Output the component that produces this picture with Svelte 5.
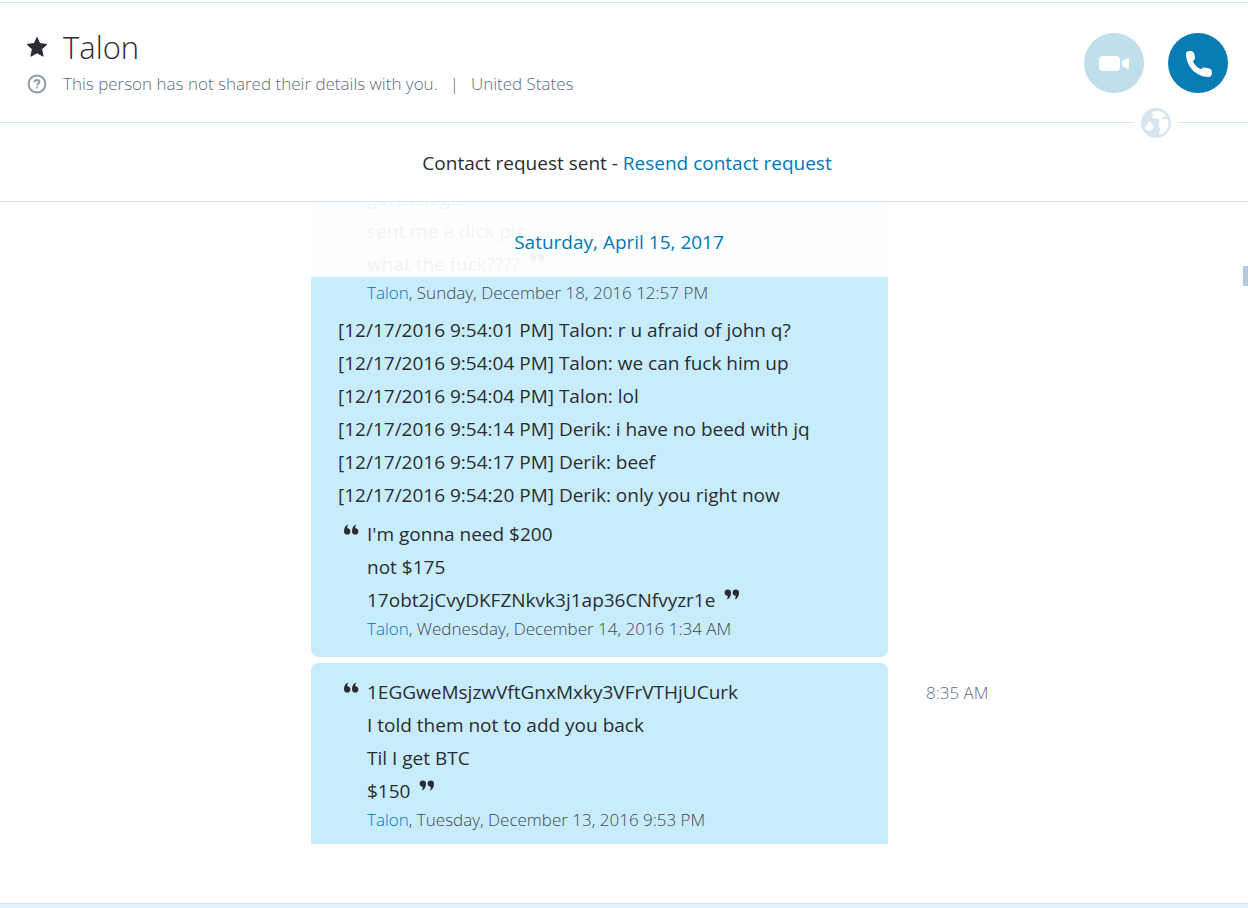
<script>
  const contact = { name: 'Talon', status: 'This person has not shared their details with you.', location: 'United States' }

  const messages = [
    {
      time: '',
      parts: [
        { kind: 'quote', lines: ['gorde logic', 'sent me a dick pic', 'what the fuck????'], author: 'Talon', date: 'Sunday, December 18, 2016 12:57 PM' },
        { kind: 'log', lines: [
          '[12/17/2016 9:54:01 PM] Talon: r u afraid of john q?',
          '[12/17/2016 9:54:04 PM] Talon: we can fuck him up',
          '[12/17/2016 9:54:04 PM] Talon: lol',
          '[12/17/2016 9:54:14 PM] Derik: i have no beed with jq',
          '[12/17/2016 9:54:17 PM] Derik: beef',
          '[12/17/2016 9:54:20 PM] Derik: only you right now',
        ] },
        { kind: 'quote', lines: ["I'm gonna need $200", 'not $175', '17obt2jCvyDKFZNkvk3j1ap36CNfvyzr1e'], author: 'Talon', date: 'Wednesday, December 14, 2016 1:34 AM' },
      ],
    },
    {
      time: '8:35 AM',
      parts: [
        { kind: 'quote', lines: ['1EGGweMsjzwVftGnxMxky3VFrVTHjUCurk', 'I told them not to add you back', 'Til I get BTC', '$150'], author: 'Talon', date: 'Tuesday, December 13, 2016 9:53 PM' },
      ],
    },
  ]
</script>

{#snippet mark(close)}
  <svg class="mark" class:close viewBox="0 0 16 12" aria-hidden="true">
    <path d="M5.500.500C2.500 1 1 3.500 1 7.500a3.200 3.200 0 1 0 3.400-3.300C4 2.800 4.500 1.400 5.500.500z" />
    <path d="M13.500.500C10.500 1 9 3.500 9 7.500a3.200 3.200 0 1 0 3.400-3.300C12 2.800 12.500 1.400 13.500.500z" />
  </svg>
{/snippet}

<div class="app">
  <header class="top">
    <div class="who">
      <button class="plain" aria-label="Favorite">
        <svg width="22" height="22" viewBox="0 0 22 22"><path fill="#2b2c33" stroke="#2b2c33" stroke-linejoin="round" d="M11 1.500l2.800 6.100 7 .8-5.200 4.700 1.500 7.100-6.100-3.400-6.100 3.400 1.500-7.100-5.200-4.700 7-.8z" /></svg>
      </button>
      <h1>{contact.name}</h1>
      <svg class="unknown" width="20" height="20" viewBox="0 0 20 20" aria-hidden="true">
        <circle cx="10" cy="10" r="8.400" />
        <path d="M7.700 8.200c0-1.500 1-2.300 2.400-2.300s2.300.8 2.300 2c0 1.600-2.200 1.700-2.200 3.500M10.200 12.700v1.700" />
      </svg>
      <p>{contact.status}<span class="bar">|</span>{contact.location}</p>
    </div>
    <div class="calls">
      <button class="call" disabled aria-label="Video call">
        <svg width="60" height="60" viewBox="0 0 60 60"><rect x="15" y="23" width="21" height="15" rx="4" /><path d="M38 28l5.500-2.600q1.500-.6 1.500.8v8.600q0 1.400-1.500.8L38 33z" /></svg>
      </button>
      <button class="call phone" aria-label="Call">
        <svg width="60" height="60" viewBox="0 0 60 60"><path d="M18 20.500c0-1.700 1.800-2.500 4.200-2.500 3 0 3.700 1.200 4.300 3.900.5 2.200.8 4.100-.4 5.100l-1.300 1c1.300 3.600 4.300 6.400 8 8.200l1.300-1c1.100-1 3-.6 5.200-.1 2.900.6 4.700 1.400 4.700 4.400 0 2.800-1.200 4.500-3.300 4.500C28 44 18 33 18 20.500z" /></svg>
      </button>
    </div>
    <span class="globe">
      <svg width="30" height="30" viewBox="0 0 30 30" aria-hidden="true">
        <circle cx="15" cy="15" r="15" fill="#d9e5ee" />
        <path d="M11 4q5-2 10 0 3 1.500 4.500 4.500l-4 .5q-1 .5-.5 2h6q1 4 0 8-2 5.500-7 7.500-2 .5-2-1.500t1-3q.5-1-.5-2.500-1.500-2-.5-4 1-2 0-4-1.500-1.500-4.500-1.300T10 9.500q2 .3 2.500-1L12 6Q10.500 5.500 11 4z" />
        <path d="M7.500 13q3-.5 3 2.300.3 1.700 1.800 2.200 1.500 1.500-.3 3.500-2 2-5 1.500-3-.5-3-3Q4.500 17.500 6.500 16z" />
      </svg>
    </span>
  </header>

  <div class="notice">Contact request sent - <a href="#resend">Resend contact request</a></div>

  <main>
    <h2>Saturday, April 15, 2017</h2>
    <div class="stream">
      {#each messages as message}
        <article>
          <div class="bubble">
            {#each message.parts as part}
              {#if part.kind === 'quote'}
                <blockquote>
                  {@render mark(false)}
                  <div>
                    {#each part.lines as line, i}
                      <p>{line}{#if i === part.lines.length - 1}{@render mark(true)}{/if}</p>
                    {/each}
                    <footer><a href="#profile">{part.author}</a>, {part.date}</footer>
                  </div>
                </blockquote>
              {:else}
                <div class="log">
                  {#each part.lines as line}<p>{line}</p>{/each}
                </div>
              {/if}
            {/each}
          </div>
          {#if message.time}<time>{message.time}</time>{/if}
        </article>
      {/each}
    </div>
    <span class="thumb"></span>
  </main>

  <div class="composer"></div>
</div>

<style>
  :global(body) { margin: 0; background: #fff; }
  h1, h2, p, blockquote { margin: 0; font-weight: 400; }
  a { color: #0078b7; text-decoration: none; }
  button { border: 0; padding: 0; cursor: pointer; }
  svg { display: block; }

  .app {
    display: flex; flex-direction: column; height: 100vh; box-sizing: border-box; padding-top: 2px;
    font-family: "Open Sans", "Noto Sans", sans-serif; font-size: 19px; color: #2b2c33;
  }

  .top {
    position: relative; flex: none;
    display: flex; justify-content: space-between; align-items: center;
    height: 119px; padding: 0 20px 0 26px;
    border-top: 1px solid #d5e6f1; border-bottom: 1px solid #d5e6f1;
  }
  .who { display: grid; grid-template-columns: 22px 1fr; column-gap: 15px; align-items: center; padding-bottom: 2px; }
  .plain { background: none; }
  h1 { font-size: 31px; line-height: 44px; font-weight: 300; }
  .who p { font-size: 17px; line-height: 30px; font-weight: 300; color: #5d6b80; }
  .bar { margin: 0 12px; }
  .unknown { justify-self: center; fill: none; stroke: #8f9ba5; stroke-width: 2; }
  .calls { display: flex; gap: 24px; }
  .call { width: 60px; height: 60px; border-radius: 50%; background: #c0deec; fill: #fff; }
  .phone { background: #0a7cb5; }
  .globe { position: absolute; right: 70px; bottom: -16px; padding: 0 7px; background: #fff; }
  .globe path { fill: #fff; }

  .notice {
    flex: none; height: 78px; line-height: 80px; padding-left: 6px;
    text-align: center; border-bottom: 1px solid #d9e5ee;
  }

  main {
    position: relative; flex: 1; min-height: 0; overflow: hidden;
    display: flex; flex-direction: column; justify-content: flex-end;
  }
  h2 {
    position: absolute; z-index: 1; top: 0; left: 0; right: 0;
    height: 75px; line-height: 80px; padding-right: 10px; box-sizing: border-box;
    text-align: center; font-size: 19px; color: #0078b7; background: rgba(255,255,255,0.94);
  }
  .stream { display: flex; flex-direction: column; gap: 6px; }
  article { display: grid; grid-template-columns: 311fr 577fr 360fr; }
  .bubble {
    grid-column: 2; min-width: 0; box-sizing: border-box;
    display: flex; flex-direction: column; gap: 6px;
    padding: 13px 27px 17px; border-radius: 8px; background: #c7ecfc;
  }
  article:last-child .bubble { padding-bottom: 13px; border-radius: 8px 8px 0 0; }
  .bubble p { line-height: 33px; }
  .log { padding-top: 4px; }
  blockquote { display: grid; grid-template-columns: 29px 1fr; }
  blockquote footer { font-size: 17px; line-height: 23px; font-weight: 300; color: #3f4656; }
  .mark { width: 16px; height: 12px; margin: 6px 0 0 5px; fill: #2b2c33; }
  .mark.close { display: inline-block; margin: 0 0 0 9px; vertical-align: 7px; transform: rotate(180deg); }
  time { padding-left: 38px; font-size: 17px; line-height: 60px; font-weight: 300; color: #5d6b80; }

  .thumb { position: absolute; z-index: 2; top: 64px; right: 0; width: 5px; height: 20px; background: #b4cadb; }
  .composer { flex: none; height: 64px; box-sizing: border-box; background: linear-gradient(#fff 59px, #d9e5ee 59px 60px, #def4fe 60px); }
</style>
